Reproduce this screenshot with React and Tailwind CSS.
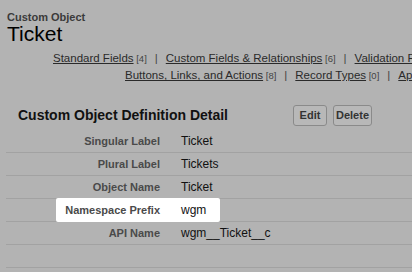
import React from "react";

const rows = [
  { label: "Singular Label", value: "Ticket" },
  { label: "Plural Label", value: "Tickets" },
  { label: "Object Name", value: "Ticket" },
  { label: "Namespace Prefix", value: "wgm", highlight: true },
  { label: "API Name", value: "wgm__Ticket__c" },
  { label: "", value: "" },
];

const Link = ({ text, count }) => (
  <span>
    <span className="underline text-[#2a2a2a]">{text}</span>
    <span className="text-[9.5px] text-[#444]"> [{count}]</span>
  </span>
);

const Sep = () => <span className="px-[8px] text-[#444]">|</span>;

export default function App() {
  return (
    <div className="w-[412px] h-[272px] overflow-hidden bg-[#b3b3b3] font-['Liberation_Sans',Arial,sans-serif]">
      {/* Title */}
      <div className="pl-[7px] pt-[11px]">
        <div className="text-[11px] font-bold leading-[12px] text-[#3a3a3a]">Custom Object</div>
        <div className="text-[21px] leading-[22px] text-black">Ticket</div>
      </div>

      {/* Related list links */}
      <div className="mt-[5px] whitespace-nowrap text-[11.5px] leading-[17px]">
        <div className="pl-[53px]">
          <Link text="Standard Fields" count={4} />
          <Sep />
          <Link text="Custom Fields & Relationships" count={6} />
          <Sep />
          <span className="underline text-[#2a2a2a]">Validation Rules</span>
        </div>
        <div className="pl-[125px]">
          <Link text="Buttons, Links, and Actions" count={8} />
          <Sep />
          <Link text="Record Types" count={0} />
          <Sep />
          <span className="underline text-[#2a2a2a]">Apex Sharing Reasons</span>
        </div>
      </div>

      {/* Detail header */}
      <div className="mt-[21px] flex items-center h-[21px] pl-[18px]">
        <div className="w-[275px] text-[14px] font-bold text-[#111]">Custom Object Definition Detail</div>
        <div className="flex gap-[6px]">
          <button className="w-[34px] h-[21px] rounded-[3px] border border-[#8a8a8a] bg-[#b8b8b8] text-[11px] font-bold text-[#333]">
            Edit
          </button>
          <button className="w-[39px] h-[21px] rounded-[3px] border border-[#8a8a8a] bg-[#b8b8b8] text-[11px] font-bold text-[#333]">
            Delete
          </button>
        </div>
      </div>

      {/* Detail rows */}
      <div className="mt-[4px] ml-[6px]">
        {rows.map((row, idx) => (
          <div key={idx} className="relative flex items-center h-[23px] border-b border-[#a2a2a2]">
            {row.highlight && (
              <div className="absolute left-[50px] top-[-1px] w-[164px] h-[24px] bg-white rounded-[2px]" />
            )}
            <div className="relative w-[154px] text-right text-[11px] font-bold text-[#4a4a4a]">{row.label}</div>
            <div className="relative pl-[21px] text-[12px] text-[#111]">{row.value}</div>
          </div>
        ))}
      </div>
    </div>
  );
}
